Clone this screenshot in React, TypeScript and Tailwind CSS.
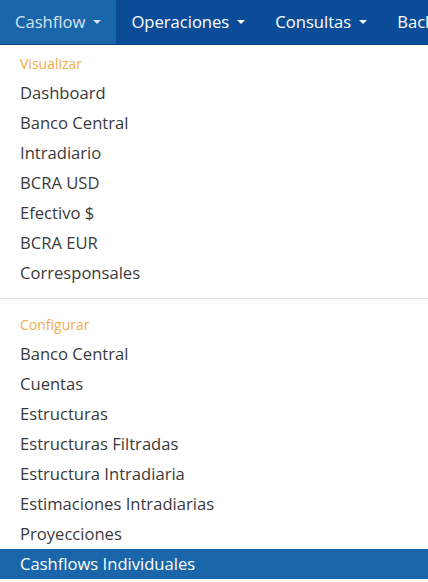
import React from "react";

const navItems = ["Cashflow", "Operaciones", "Consultas", "Backoffice"];

const groups: { title: string; items: string[] }[] = [
  {
    title: "Visualizar",
    items: ["Dashboard", "Banco Central", "Intradiario", "BCRA USD", "Efectivo $", "BCRA EUR", "Corresponsales"],
  },
  {
    title: "Configurar",
    items: [
      "Banco Central",
      "Cuentas",
      "Estructuras",
      "Estructuras Filtradas",
      "Estructura Intradiaria",
      "Estimaciones Intradiarias",
      "Proyecciones",
      "Cashflows Individuales",
    ],
  },
];

function Caret() {
  return <span className="ml-[8px] inline-block h-0 w-0 border-x-[4px] border-t-[4px] border-x-transparent border-t-current align-middle" />;
}

export default function App() {
  return (
    <div className="h-[582px] w-[428px] overflow-hidden bg-white" style={{ fontFamily: '"Open Sans", sans-serif' }}>
      <nav className="flex h-[45px] overflow-hidden border-b border-[#073f82] bg-[#0b4c99] whitespace-nowrap">
        {navItems.map((n, i) => (
          <div
            key={n}
            className={
              "flex shrink-0 items-center px-[15px] text-[16.6px] " +
              (i === 0 ? "bg-[#1a66aa] text-[#d8e2ee]" : "text-white")
            }
          >
            {n}
            {i < 3 && <Caret />}
          </div>
        ))}
      </nav>
      <div className="pt-[3px]">
        {groups.map((g, gi) => (
          <div key={g.title}>
            {gi > 0 && <div className="my-[10px] h-px bg-[#e5e5e5]" />}
            <div className="flex h-[30px] items-center px-[20px] text-[14px] text-[#f0ad4e]">{g.title}</div>
            {g.items.map((it, ii) => {
              const active = gi === 1 && ii === g.items.length - 1;
              return (
                <div
                  key={it}
                  className={
                    "flex h-[30px] items-center px-[20px] text-[16.6px] " +
                    (active ? "bg-[#1a66aa] text-white" : "text-[#3a3a3a]")
                  }
                >
                  {it}
                </div>
              );
            })}
          </div>
        ))}
      </div>
    </div>
  );
}
